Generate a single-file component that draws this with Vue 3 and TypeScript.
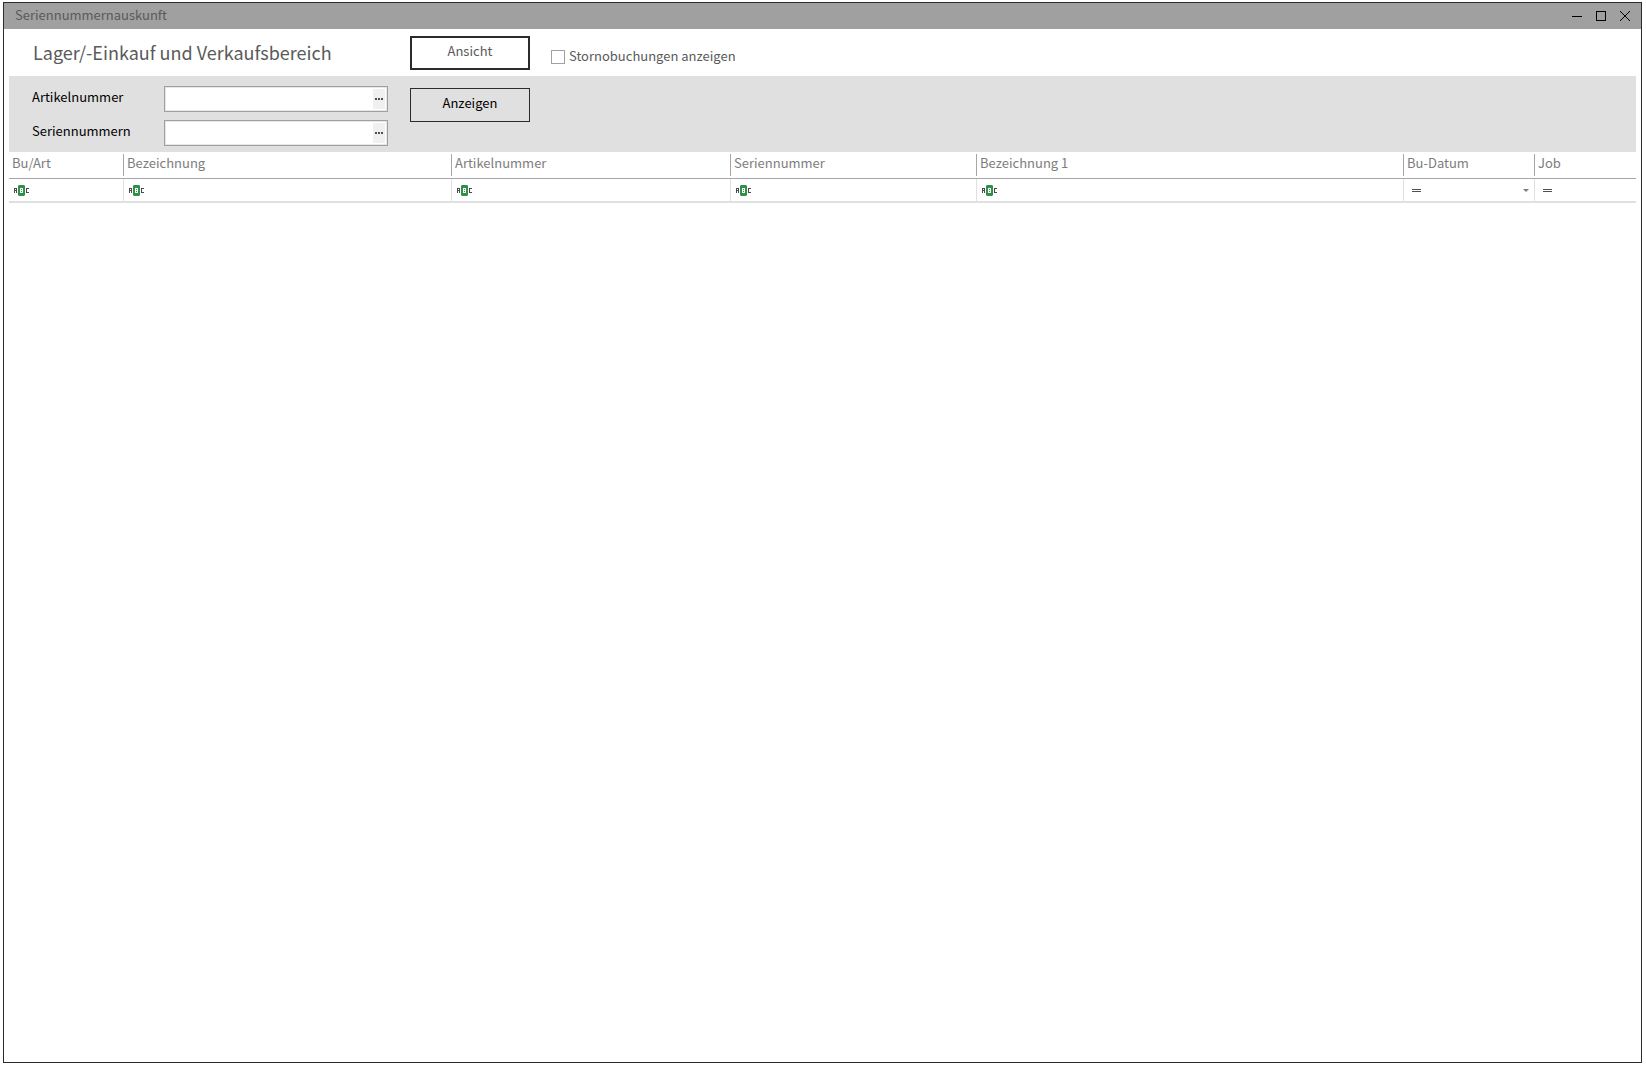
<script setup lang="ts">
import { ref } from 'vue'

interface Column {
  id: string
  title: string
  width: string
  filter: 'text' | 'equals'
  dropdown?: boolean
}

const columns: Column[] = [
  { id: 'art', title: 'Bu/Art', width: '114px', filter: 'text' },
  { id: 'bez', title: 'Bezeichnung', width: '328px', filter: 'text' },
  { id: 'artnr', title: 'Artikelnummer', width: '279px', filter: 'text' },
  { id: 'sernr', title: 'Seriennummer', width: '246px', filter: 'text' },
  { id: 'bez1', title: 'Bezeichnung 1', width: '427px', filter: 'text' },
  { id: 'datum', title: 'Bu-Datum', width: '131px', filter: 'equals', dropdown: true },
  { id: 'job', title: 'Job', width: 'auto', filter: 'equals' },
]

const fields = [
  { id: 'artikelnummer', label: 'Artikelnummer' },
  { id: 'seriennummern', label: 'Seriennummern' },
]

const values = ref<Record<string, string>>({ artikelnummer: '', seriennummern: '' })
const filters = ref<Record<string, string>>({})
const showCancelled = ref(false)
</script>

<template>
  <main class="window">
    <header class="titlebar">
      <span class="caption">Seriennummernauskunft</span>
      <div class="controls">
        <button type="button" aria-label="Minimieren">
          <svg width="10" height="10" shape-rendering="crispEdges"><path d="M0 5h10v1H0z" /></svg>
        </button>
        <button type="button" aria-label="Maximieren">
          <svg width="10" height="10" shape-rendering="crispEdges"><path d="M0 0h10v10H0zM1 1v8h8V1z" fill-rule="evenodd" /></svg>
        </button>
        <button type="button" aria-label="Schließen">
          <svg width="10" height="10"><path d="M0 0l10 10M10 0L0 10" fill="none" stroke="#000" /></svg>
        </button>
      </div>
    </header>

    <section class="heading">
      <h1>Lager/-Einkauf und Verkaufsbereich</h1>
      <button type="button" class="action view">Ansicht</button>
      <label class="check">
        <input v-model="showCancelled" type="checkbox" />
        <span>Stornobuchungen anzeigen</span>
      </label>
    </section>

    <form class="search" @submit.prevent>
      <div class="fields">
        <div v-for="f in fields" :key="f.id" class="field">
          <label :for="f.id">{{ f.label }}</label>
          <div class="box">
            <input :id="f.id" v-model="values[f.id]" type="text" />
            <button type="button" :aria-label="f.label + ' auswählen'">
              <svg width="8" height="2" shape-rendering="crispEdges"><path d="M0 0h2v2H0zM3 0h2v2H3zM6 0h2v2H6z" fill="#505050" /></svg>
            </button>
          </div>
        </div>
      </div>
      <button type="submit" class="action">Anzeigen</button>
    </form>

    <table class="grid">
      <colgroup>
        <col v-for="c in columns" :key="c.id" :style="{ width: c.width }" />
      </colgroup>
      <thead>
        <tr>
          <th v-for="c in columns" :key="c.id" scope="col"><div>{{ c.title }}</div></th>
        </tr>
      </thead>
      <tbody>
        <tr>
          <td v-for="c in columns" :key="c.id">
            <div class="filter">
              <svg v-if="c.filter === 'text'" width="15" height="12" viewBox="0 -1 15 12" shape-rendering="crispEdges">
                <path d="M5 0h5v1h1v9h-1v1H5v-1H4V1h1z" fill="#2f9148" />
                <path d="M4 0h1v1H4zM10 0h1v1h-1zM4 10h1v1H4zM10 10h1v1h-1z" fill="#8cc49a" />
                <path d="M0 3h3v5H2V6H1v2H0zM1 4v1h1V4z" fill="#4a4a4a" fill-rule="evenodd" />
                <path d="M6 3h3v5H6zM7 4v1h1V4zM7 6v1h1V6z" fill="#fff" fill-rule="evenodd" />
                <path d="M12 3h3v1h-2v3h2v1h-3z" fill="#4a4a4a" />
              </svg>
              <svg v-else class="equals" width="9" height="4" shape-rendering="crispEdges">
                <path d="M0 1h9v1H0zM0 3h9v1H0z" fill="#505050" />
              </svg>
              <input v-model="filters[c.id]" type="text" :aria-label="'Filter ' + c.title" />
              <button v-if="c.dropdown" type="button" aria-label="Datum wählen">
                <svg width="6" height="4"><path d="M0 1h6L3 4z" fill="#7d7d7d" /></svg>
              </button>
            </div>
          </td>
        </tr>
      </tbody>
    </table>
  </main>
</template>

<style>
body {
  background: #fff;
}
</style>

<style scoped>
.window {
  box-sizing: border-box;
  min-height: calc(100vh - 7px);
  margin: 2px 4px 5px 3px;
  border: 1px solid #2b2b2d;
  font: 13px/24px "Noto Sans CJK SC", "Noto Sans", sans-serif;
  color: #5a5a5a;
  background: #fff;
  display: flow-root;
}
button,
input {
  font: inherit;
  color: inherit;
  padding: 0;
  margin: 0;
  border: 0;
  background: none;
}
svg {
  display: block;
}
.titlebar {
  display: flex;
  justify-content: space-between;
  height: 26px;
  padding: 0 11px;
  background: #a0a0a0;
}
.controls {
  display: flex;
  align-items: center;
  gap: 14px;
}
.heading {
  display: flex;
  height: 47px;
  padding-left: 29px;
}
h1 {
  width: 377px;
  margin: 0;
  font-size: 18px;
  font-weight: 400;
  line-height: 46px;
}
.action {
  width: 120px;
  height: 34px;
  border: 1px solid #2b2b2d;
  line-height: 24px;
  padding-bottom: 4px;
}
.view {
  margin-top: 7px;
  border-width: 2px;
}
.check {
  display: flex;
  align-items: flex-start;
  gap: 4px;
  margin-left: 21px;
  padding-top: 15px;
}
.check input {
  appearance: none;
  width: 14px;
  height: 14px;
  margin-top: 6px;
  border: 1px solid #a0a0a0;
  background: #fff;
}
.check input:checked {
  background: #5a5a5a;
}
.search {
  display: flex;
  gap: 22px;
  margin: 0 5px;
  padding: 10px 0 6px 23px;
  background: #e0e0e0;
  color: #000;
}
.fields {
  display: grid;
  gap: 8px;
}
.search .action {
  margin-top: 2px;
}
.field {
  display: flex;
  height: 26px;
}
.field label {
  width: 132px;
  line-height: 22px;
}
.box {
  display: flex;
  box-sizing: border-box;
  width: 224px;
  padding: 2px;
  border: 1px solid #a0a0a0;
  background: #fff;
  box-shadow: inset 0 0 0 1px #e6e6e6;
}
.box input {
  flex: 1;
  min-width: 0;
  padding: 0 4px;
  outline: 0;
}
.box button {
  display: flex;
  align-items: center;
  justify-content: center;
  width: 12px;
  background: #f0f0f0;
}
.grid {
  width: calc(100% - 10px);
  margin: 0 5px;
  border-spacing: 0;
  table-layout: fixed;
}
th {
  height: 26px;
  padding: 0;
  border-bottom: 1px solid #a6a6a6;
  font-weight: 400;
  text-align: left;
  color: #7d7d7d;
}
th div {
  height: 22px;
  padding-left: 3px;
  border-left: 1px solid #a6a6a6;
  line-height: 18px;
}
th:first-child div {
  border-left: 0;
}
td {
  padding: 0;
  border-left: 1px solid #e0e0e0;
  border-bottom: 2px solid #e0e0e0;
}
td:first-child {
  border-left: 0;
}
.filter {
  display: flex;
  align-items: center;
  height: 22px;
  padding: 0 5px;
}
.filter svg {
  flex: none;
}
.filter .equals {
  margin-left: 3px;
}
.filter input {
  flex: 1;
  min-width: 0;
  height: 20px;
  padding-left: 4px;
  outline: 0;
}
</style>
